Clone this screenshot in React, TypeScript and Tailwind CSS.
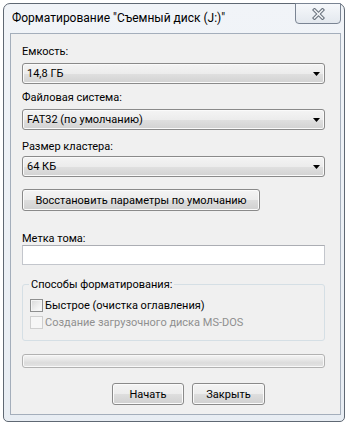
import React from "react";

const FONT = "font-['Roboto',_'Liberation_Sans',_sans-serif]";

function Arrow() {
  return (
    <svg width="7" height="4" viewBox="0 0 7 4" className="shrink-0">
      <path d="M0 0H7L3.5 4Z" fill="#000" />
    </svg>
  );
}

function Combo({ value, className = "" }: { value: string; className?: string }) {
  return (
    <div
      className={`flex items-center justify-between h-[21px] w-[303px] pl-[4px] pr-[4px] rounded-[3px] border border-[#8a8a8a] bg-[linear-gradient(to_bottom,#f4f4f4_0%,#ececec_50%,#e0e0e0_51%,#d2d2d2_100%)] shadow-[inset_0_0_0_1px_#fafafa] text-[11px] leading-[15px] text-black ${className}`}
    >
      <span>{value}</span>
      <Arrow />
    </div>
  );
}

function Button({ label, className = "" }: { label: string; className?: string }) {
  return (
    <div
      className={`flex items-center justify-center h-[22px] whitespace-nowrap rounded-[3px] border border-[#8a8a8a] bg-[linear-gradient(to_bottom,#f4f4f4_0%,#ececec_50%,#dedede_51%,#d0d0d0_100%)] shadow-[inset_0_0_0_1px_#fbfbfb] text-[11px] leading-[15px] text-black ${className}`}
    >
      {label}
    </div>
  );
}

function Checkbox({ label, disabled = false, className = "" }: { label: string; disabled?: boolean; className?: string }) {
  return (
    <div className={`flex items-center h-[15px] pl-[7px] ${className}`}>
      <div
        className={`w-[13px] h-[13px] border ${
          disabled
            ? "border-[#cfcfcf] bg-[#f6f6f6]"
            : "border-[#8e8f8f] bg-[linear-gradient(135deg,#d8d8d8_0%,#f0f0f0_60%,#fdfdfd_100%)] shadow-[inset_0_0_0_1px_#f4f4f4]"
        }`}
      />
      <span className={`ml-[2px] text-[11px] leading-[15px] whitespace-nowrap ${disabled ? "text-[#8f8f8f]" : "text-black"}`}>{label}</span>
    </div>
  );
}

function CloseGlyph() {
  return (
    <svg width="13" height="12" viewBox="0 0 13 12">
      <path d="M2.5 2L10.5 10M10.5 2L2.5 10" stroke="#6a737e" strokeWidth="3.6" strokeLinecap="square" />
      <path d="M2.5 2L10.5 10M10.5 2L2.5 10" stroke="#f3f5f8" strokeWidth="1.5" strokeLinecap="square" />
    </svg>
  );
}

export default function App() {
  return (
    <div className={`w-[352px] h-[425px] bg-white pt-[3px] pl-[3px] ${FONT}`}>
      <div className="w-[342px] h-[419px] flex flex-col rounded-t-[7px] rounded-b-[5px] border border-[#5f6873] bg-[linear-gradient(to_bottom,#f1f4f8,#e8edf3)]">
        {/* Title bar */}
        <div className="flex justify-between h-[29px]">
          <div className="pl-[8px] pt-[7px] text-[12px] leading-[15px] text-black whitespace-nowrap">
            Форматирование "Съемный диск (J:)"
          </div>
          <div className="-mt-px mr-[3px] w-[46px] h-[21px] flex items-center justify-center rounded-b-[4px] border border-[#7a8493] bg-[linear-gradient(to_bottom,#f6f8fb,#e3e8ee)]">
            <CloseGlyph />
          </div>
        </div>

        {/* Client area */}
        <div className="ml-[6px] mr-[3px] h-[382px] border border-[#a4aebb] bg-[#f0f0f0] pl-[11px] pt-[10px] text-[11px] leading-[15px] text-black">
          <div className="h-[15px]">Емкость:</div>
          <Combo value="14,8 ГБ" className="mt-[4px]" />

          <div className="h-[15px] mt-[6px]">Файловая система:</div>
          <Combo value="FAT32 (по умолчанию)" className="mt-[4px]" />

          <div className="h-[15px] mt-[9px]">Размер кластера:</div>
          <Combo value="64 КБ" className="mt-[2px]" />

          <Button label="Восстановить параметры по умолчанию" className="mt-[12px] w-[238px]" />

          <div className="h-[14px] mt-[20px] leading-[15px]">Метка тома:</div>
          <div className="h-[20px] w-[303px] border border-[#c3c6cc] border-t-[#abadb3] bg-white" />

          {/* Group box */}
          <div className="mt-[19px] w-[303px] h-[57px] border border-[#d5dfe5] rounded-[3px]">
            <div className="-mt-[8px] ml-[6px] w-fit px-[2px] h-[15px] bg-[#f0f0f0]">Способы форматирования:</div>
            <Checkbox label="Быстрое (очистка оглавления)" className="mt-[6px]" />
            <Checkbox label="Создание загрузочного диска MS-DOS" disabled className="mt-[2px]" />
          </div>

          {/* Progress */}
          <div className="mt-[13px] w-[303px] h-[14px] rounded-[3px] border border-[#b2b2b2] bg-[linear-gradient(to_bottom,#f5f5f5_0%,#e9e9e9_35%,#dcdcdc_65%,#e4e4e4_100%)] shadow-[inset_0_0_0_1px_#f8f8f8]" />

          <div className="mt-[15px] ml-[90px] flex gap-[8px]">
            <Button label="Начать" className="w-[72px]" />
            <Button label="Закрыть" className="w-[73px]" />
          </div>
        </div>
      </div>
    </div>
  );
}
